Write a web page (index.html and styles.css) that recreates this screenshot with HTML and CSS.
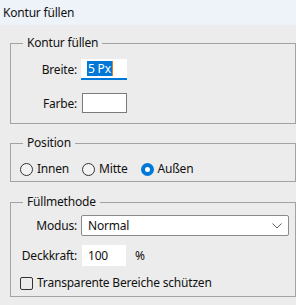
FILE: index.html
```html
<!DOCTYPE html>
<html lang="de">
<head>
  <meta charset="UTF-8">
  <title>Kontur füllen</title>
  <link rel="stylesheet" href="styles.css">
</head>
<body>
<div class="titlebar">Kontur füllen</div>

<div class="dialog">
  <fieldset class="group group-stroke">
    <legend>Kontur füllen</legend>
    <div class="form-grid">
      <label>Breite:</label>
      <div class="field field-active"><span class="sel">5 Px</span><span class="caret"></span></div>
      <label>Farbe:</label>
      <div class="field field-color"></div>
    </div>
  </fieldset>

  <fieldset class="group group-position">
    <legend>Position</legend>
    <div class="radios">
      <span class="radio-item"><i class="radio"></i>Innen</span>
      <span class="radio-item"><i class="radio"></i>Mitte</span>
      <span class="radio-item"><i class="radio checked"></i>Außen</span>
    </div>
  </fieldset>

  <fieldset class="group group-fill">
    <legend>Füllmethode</legend>
    <div class="form-grid">
      <label>Modus:</label>
      <div class="select">
        <span>Normal</span>
        <svg width="10" height="6" viewBox="0 0 10 6"><polyline points="0.5,0.5 5,5 9.5,0.5" fill="none" stroke="#5f5f5f" stroke-width="1"/></svg>
      </div>
      <label>Deckkraft:</label>
      <div class="opacity-row">
        <div class="field field-plain">100</div>
        <span class="unit">%</span>
      </div>
      <div class="check-row"><i class="checkbox"></i>Transparente Bereiche schützen</div>
    </div>
  </fieldset>
</div>
</body>
</html>
```

FILE: styles.css
```css
body {
  margin:0;
  background:#ececec;
  font-family:"Noto Sans", sans-serif;
  font-size:12px;
  letter-spacing:-0.2px;
  color:#111;
  width:296px;
  height:305px;
  overflow:hidden;
}

.titlebar {
  height:25px;
  line-height:25px;
  padding-left:3px;
  background:#eef3fa;
}

.dialog {
  padding:10px 0 0 10px;
}

.group {
  margin:0;
  border:1px solid #a3a3a3;
  padding:0;
}
.group + .group {
  margin-top:11px;
}
.group-fill {
  margin-top:12px !important;
}

legend {
  margin-left:12px;
  padding:0 4px;
  line-height:16px;
}

.group-stroke { padding:8px 0 10px; }
.group-position { padding:10px 0 4px; }
.group-fill { padding:5px 0 5px; }

.form-grid {
  display:grid;
  grid-template-columns:66px 1fr;
  column-gap:4px;
  row-gap:9px;
  align-items:center;
}
.group-stroke .form-grid {
  row-gap:13px;
}
.form-grid label {
  justify-self:end;
}

.field {
  box-sizing:border-box;
  width:46px;
  height:21px;
  background:#fff;
}
.field-active {
  border-bottom:2px solid #0078d7;
  padding:2px 0 0 6px;
  display:flex;
  align-items:flex-start;
}
.sel {
  background:#0078d7;
  color:#fff;
  line-height:15px;
  padding:0 1px;
}
.caret {
  width:1px;
  height:15px;
  background:#e07b27;
}
.field-color {
  height:20px;
  margin-left:1px;
  width:45px;
  border:1px solid #7a7a7a;
}
.field-plain {
  width:44px;
  margin-left:1px;
  line-height:21px;
  padding-left:6px;
}

.radios {
  display:flex;
  gap:13px;
  padding-left:9px;
  line-height:16px;
}
.radio-item {
  display:flex;
  align-items:center;
  gap:4px;
}
.radio {
  box-sizing:border-box;
  width:13px;
  height:13px;
  border:1px solid #333;
  border-radius:50%;
  background:#f3f3f3;
}
.radio.checked {
  border:4px solid #0078d7;
  background:#fff;
}

.select {
  box-sizing:border-box;
  width:208px;
  height:21px;
  background:#fff;
  border:1px solid #8a8a8a;
  border-radius:2px;
  display:flex;
  align-items:center;
  justify-content:space-between;
  padding:0 6px 0 6px;
}

.opacity-row {
  display:flex;
  align-items:center;
  gap:9px;
}

.check-row {
  grid-column:1 / -1;
  display:flex;
  align-items:center;
  gap:4px;
  padding-left:9px;
  line-height:16px;
}
.checkbox {
  box-sizing:border-box;
  width:13px;
  height:13px;
  border:1px solid #333;
  border-radius:2px;
}
```
